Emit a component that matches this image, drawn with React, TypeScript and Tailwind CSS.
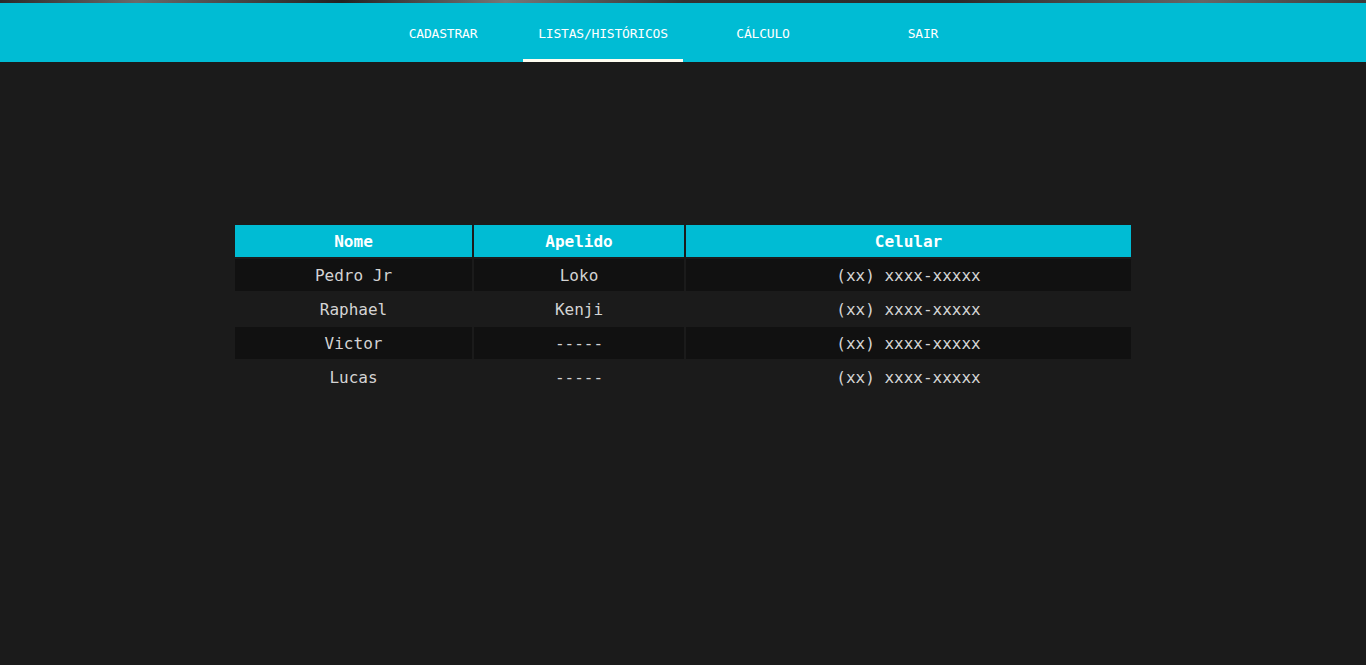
import React from "react"

const links = ["CADASTRAR", "LISTAS/HISTÓRICOS", "CÁLCULO", "SAIR"]

const rows = [
    { nome: "Pedro Jr", apelido: "Loko", celular: "(xx) xxxx-xxxxx" },
    { nome: "Raphael", apelido: "Kenji", celular: "(xx) xxxx-xxxxx" },
    { nome: "Victor", apelido: "-----", celular: "(xx) xxxx-xxxxx" },
    { nome: "Lucas", apelido: "-----", celular: "(xx) xxxx-xxxxx" },
]

const App = () => {
    return (
        <div className="min-h-screen bg-[#1b1b1b] font-['DejaVu_Sans_Mono','Liberation_Mono',monospace]">
            <div className="h-[3px] bg-[linear-gradient(90deg,#2a2a2a,#6a6a6a_10%,#222_25%,#777_37%,#333_50%,#2b2b2b_70%,#666_88%,#3a3a3a)]" />
            <nav className="h-[59px] bg-[#00bcd4] flex justify-center">
                {links.map((l, i) => (
                    <a
                        key={l}
                        className={
                            "w-[160px] flex items-center justify-center text-[13px] text-white tracking-[-0.2px] border-b-[3px] pt-[5px] " +
                            (i === 1 ? "border-[#fffdf0]" : "border-transparent")
                        }
                    >
                        {l}
                    </a>
                ))}
            </nav>
            <table className="mx-auto mt-[161px] w-[900px] table-fixed border-separate border-spacing-[2px] text-[16px]">
                <colgroup>
                    <col className="w-[237px]" />
                    <col className="w-[210px]" />
                    <col />
                </colgroup>
                <thead>
                    <tr>
                        <th className="h-8 p-0 pt-[2px] bg-[#00bcd4] text-white font-bold">Nome</th>
                        <th className="h-8 p-0 pt-[2px] bg-[#00bcd4] text-white font-bold">Apelido</th>
                        <th className="h-8 p-0 pt-[2px] bg-[#00bcd4] text-white font-bold">Celular</th>
                    </tr>
                </thead>
                <tbody>
                    {rows.map((r, i) => (
                        <tr key={r.nome} className={i % 2 === 0 ? "bg-[#111111]" : ""}>
                            <td className="h-8 p-0 pt-[2px] text-center text-[#d4d4d4]">{r.nome}</td>
                            <td className="h-8 p-0 pt-[2px] text-center text-[#d4d4d4]">{r.apelido}</td>
                            <td className="h-8 p-0 pt-[2px] text-center text-[#d4d4d4]">{r.celular}</td>
                        </tr>
                    ))}
                </tbody>
            </table>
        </div>
    )
}

export default App
